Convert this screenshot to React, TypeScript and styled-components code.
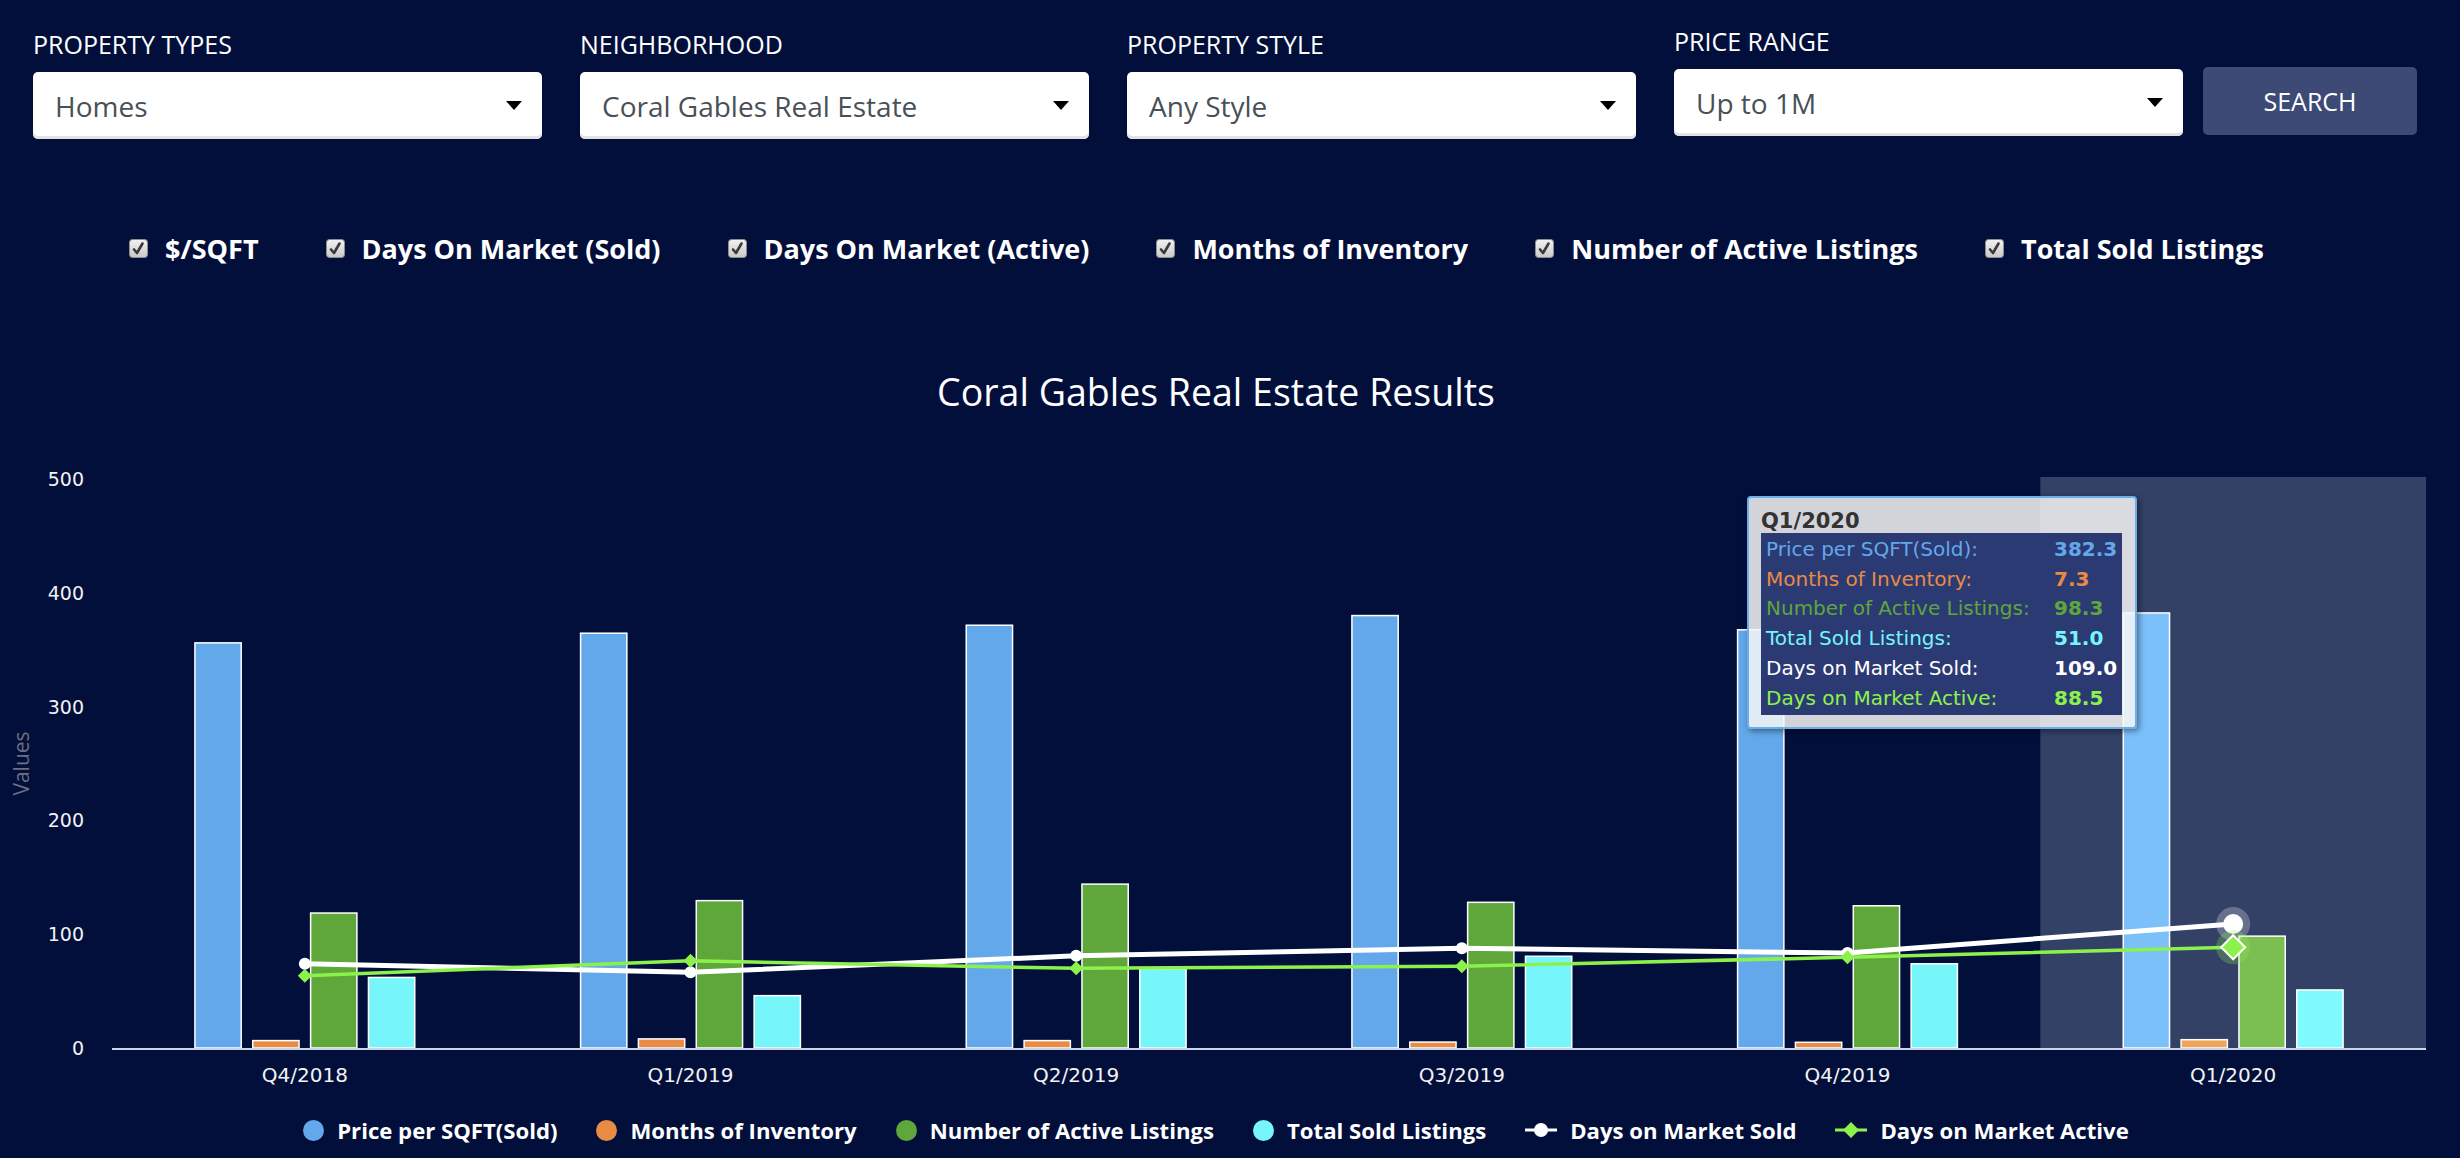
import React from 'react'
import styled, { createGlobalStyle } from 'styled-components'

const GlobalStyle = createGlobalStyle`
  html, body {
    margin: 0;
    padding: 0;
    background: #020f3b;
  }
  body {
    font-family: "Open Sans", "Liberation Sans", sans-serif;
    color: #fff;
  }
`

const filters = [
    { label: 'Property Types', value: 'Homes' },
    { label: 'Neighborhood', value: 'Coral Gables Real Estate' },
    { label: 'Property Style', value: 'Any Style' },
]

const checks = ['$/SQFT', 'Days On Market (Sold)', 'Days On Market (Active)', 'Months of Inventory', 'Number of Active Listings', 'Total Sold Listings']

const categories = ['Q4/2018', 'Q1/2019', 'Q2/2019', 'Q3/2019', 'Q4/2019', 'Q1/2020']

const barSeries = [
    { name: 'Price per SQFT(Sold)', color: '#63a8ea', hover: '#7cc0fa', data: [356, 364.5, 371.5, 380, 367.5, 382.3] },
    { name: 'Months of Inventory', color: '#e88b45', hover: '#f0a55c', data: [6.5, 8, 6.5, 5.2, 5, 7.3] },
    { name: 'Number of Active Listings', color: '#5fa63b', hover: '#7bbf52', data: [118.6, 129.5, 144, 128, 125, 98.3] },
    { name: 'Total Sold Listings', color: '#76f5fb', hover: '#80fbfd', data: [62, 46, 69.5, 80.6, 74, 51] },
]

const lineSeries = [
    { name: 'Days on Market Sold', color: '#ffffff', width: 5, marker: 'circle', data: [74, 66.5, 81, 87.6, 83.5, 109] },
    { name: 'Days on Market Active', color: '#8cf24b', width: 3.5, marker: 'diamond', data: [63.5, 76.7, 70, 71.8, 79.7, 88.5] },
]

const HOVER = 5

// plot geometry, in svg pixels
const W = 2432
const H = 650
const LEFT = 112
const RIGHT = 2426
const TOP = 30
const BOTTOM = 599
const Y_MAX = 500
const catW = (RIGHT - LEFT) / categories.length
const slot = (catW * 0.6) / barSeries.length
const yPos = (v: number) => BOTTOM - (v * (BOTTOM - TOP)) / Y_MAX
const cx = (i: number) => LEFT + (i + 0.5) * catW

const diamond = (x: number, y: number, r: number) =>
    `${x},${y - r} ${x + r},${y} ${x},${y + r} ${x - r},${y}`

const Marker = ({ type, x, y, r, color, stroke }: { type: string; x: number; y: number; r: number; color: string; stroke?: string }) =>
    type === 'circle'
        ? <circle cx={x} cy={y} r={r} fill={color} stroke={stroke} strokeWidth={stroke ? 2 : 0} />
        : <polygon points={diamond(x, y, r)} fill={color} stroke={stroke} strokeWidth={stroke ? 2 : 0} />

const Chart = () => (
    <ChartSvg width={W} height={H} viewBox={`0 0 ${W} ${H}`}>
        <rect x={LEFT + HOVER * catW} y={TOP - 2} width={catW} height={BOTTOM - TOP + 2} fill="rgba(204,214,235,0.25)" />

        {[0, 100, 200, 300, 400, 500].map(v => (
            <AxisText key={v} x={84} y={yPos(v) + 7} textAnchor="end" fontSize={19}>{v}</AxisText>
        ))}
        <AxisTitle transform={`translate(29 ${(TOP + BOTTOM) / 2}) rotate(-90)`} textAnchor="middle">Values</AxisTitle>

        {categories.map((c, i) =>
            barSeries.map((s, j) => {
                const x = LEFT + i * catW + catW * 0.2 + j * slot + slot * 0.1
                const y = yPos(s.data[i])
                return (
                    <rect key={c + j} x={x} y={y} width={slot * 0.8} height={BOTTOM - y}
                        fill={i === HOVER ? s.hover : s.color} stroke="#fff" strokeWidth={1.5} />
                )
            })
        )}

        <line x1={LEFT} x2={RIGHT} y1={BOTTOM + 1} y2={BOTTOM + 1} stroke="#ccd6eb" strokeWidth={2} />

        {categories.map((c, i) => (
            <AxisText key={c} x={cx(i)} y={BOTTOM + 34} textAnchor="middle" fontSize={20}>{c}</AxisText>
        ))}

        {lineSeries.map(s => (
            <g key={s.name}>
                <polyline fill="none" stroke={s.color} strokeWidth={s.width} strokeLinejoin="round"
                    points={s.data.map((v, i) => `${cx(i)},${yPos(v)}`).join(' ')} />
                {s.data.map((v, i) => i === HOVER ? (
                    <g key={i}>
                        <circle cx={cx(i)} cy={yPos(v)} r={17} fill={s.color} opacity={0.25} />
                        <Marker type={s.marker} x={cx(i)} y={yPos(v)} r={s.marker === 'circle' ? 10 : 12} color={s.color}
                            stroke={s.marker === 'circle' ? undefined : '#fff'} />
                    </g>
                ) : (
                    <Marker key={i} type={s.marker} x={cx(i)} y={yPos(v)} r={s.marker === 'circle' ? 6 : 7} color={s.color} />
                ))}
            </g>
        ))}
    </ChartSvg>
)

const CheckIcon = () => (
    <svg width="19" height="19" viewBox="0 0 19 19">
        <defs>
            <linearGradient id="cbg" x1="0" y1="0" x2="0" y2="1">
                <stop offset="0" stopColor="#f2f2f2" />
                <stop offset="1" stopColor="#c9c9c9" />
            </linearGradient>
        </defs>
        <rect x="0.5" y="0.5" width="18" height="18" rx="3" fill="url(#cbg)" stroke="#8d8d8d" />
        <path d="M5 10.5 L8 14 L13.5 4.5" fill="none" stroke="#3a3a3a" strokeWidth="2.6" strokeLinecap="round" strokeLinejoin="round" />
    </svg>
)

const LegendSymbol = ({ color, line, marker }: { color: string; line?: boolean; marker?: string }) =>
    line ? (
        <svg width="32" height="20" viewBox="0 0 32 20">
            <line x1="0" x2="32" y1="10" y2="10" stroke={color} strokeWidth="3" />
            <Marker type={marker || 'circle'} x={16} y={10} r={marker === 'diamond' ? 8 : 7} color={color} />
        </svg>
    ) : (
        <Dot $color={color} />
    )

const App = () => {
    return (
        <>
            <GlobalStyle />
            <FilterBar>
                {filters.map(f => (
                    <Field key={f.label}>
                        <FieldLabel>{f.label}</FieldLabel>
                        <SelectBox>
                            {f.value}
                            <Caret />
                        </SelectBox>
                    </Field>
                ))}
                <PriceGroup>
                    <Field>
                        <FieldLabel>Price Range</FieldLabel>
                        <SelectBox>
                            Up to 1M
                            <Caret />
                        </SelectBox>
                    </Field>
                    <SearchButton type="button">Search</SearchButton>
                </PriceGroup>
            </FilterBar>

            <CheckRow>
                {checks.map(c => (
                    <CheckItem key={c}>
                        <CheckIcon />
                        {c}
                    </CheckItem>
                ))}
            </CheckRow>

            <ChartSection>
                <ChartTitle>Coral Gables Real Estate Results</ChartTitle>
                <Chart />
                <Legend>
                    {barSeries.map(s => (
                        <LegendItem key={s.name}>
                            <LegendSymbol color={s.color} />
                            {s.name}
                        </LegendItem>
                    ))}
                    {lineSeries.map(s => (
                        <LegendItem key={s.name}>
                            <LegendSymbol color={s.color} line marker={s.marker} />
                            {s.name}
                        </LegendItem>
                    ))}
                </Legend>

                <Tooltip>
                    <TooltipTitle>{categories[HOVER]}</TooltipTitle>
                    <TooltipTable>
                        {[...barSeries, ...lineSeries].map(s => (
                            <React.Fragment key={s.name}>
                                <TipLabel $color={s.color}>{s.name}:</TipLabel>
                                <TipValue $color={s.color}>{s.data[HOVER].toFixed(1)}</TipValue>
                            </React.Fragment>
                        ))}
                    </TooltipTable>
                </Tooltip>
            </ChartSection>
        </>
    )
}

const FilterBar = styled.div`
    display: flex;
    align-items: flex-start;
    gap: 38px;
    padding: 29px 0 0 33px;
`

const Field = styled.div`
    display: flex;
    flex-direction: column;
    width: 509px;
`

const PriceGroup = styled.div`
    display: flex;
    align-items: flex-end;
    gap: 20px;
    margin-top: -3px;
`

const FieldLabel = styled.div`
    font-size: 25px;
    line-height: 31px;
    text-transform: uppercase;
    color: #fff;
    margin-bottom: 12px;
`

const SelectBox = styled.div`
    height: 67px;
    box-sizing: border-box;
    display: flex;
    align-items: center;
    justify-content: space-between;
    padding: 0 20px 0 22px;
    background: #fff;
    border-radius: 5px;
    box-shadow: inset 0 -3px 0 #e3e3e3;
    font-size: 28px;
    color: #495057;
`

const Caret = styled.span`
    width: 0;
    height: 0;
    border-left: 8.5px solid transparent;
    border-right: 8.5px solid transparent;
    border-top: 9px solid #000;
`

const SearchButton = styled.button`
    width: 214px;
    height: 68px;
    margin-bottom: 1px;
    border: none;
    border-radius: 5px;
    background: #3d4a75;
    color: #fff;
    font-family: "Open Sans", "Liberation Sans", sans-serif;
    font-size: 25px;
    text-transform: uppercase;
    cursor: pointer;
`

const CheckRow = styled.div`
    display: flex;
    justify-content: center;
    margin-top: 91px;
`

const CheckItem = styled.label`
    display: flex;
    align-items: center;
    gap: 17px;
    margin-right: 67px;
    font-size: 27px;
    line-height: 37px;
    font-weight: 700;
    color: #fff;
    svg { flex: none; }
`

const ChartSection = styled.div`
    position: relative;
    width: ${W}px;
    margin-top: 100px;
`

const ChartTitle = styled.div`
    text-align: center;
    font-size: 37.5px;
    line-height: 50px;
    color: #fff;
`

const ChartSvg = styled.svg`
    display: block;
    margin-top: 32px;
`

const AxisText = styled.text`
    font-family: "DejaVu Sans", Verdana, sans-serif;
    fill: #f2f2f2;
`

const AxisTitle = styled.text`
    font-family: "Open Sans", sans-serif;
    font-size: 21px;
    fill: #6c7080;
`

const Legend = styled.div`
    display: flex;
    justify-content: center;
    gap: 39px;
    margin-top: 15px;
`

const LegendItem = styled.div`
    display: flex;
    align-items: center;
    gap: 13px;
    font-size: 22.15px;
    line-height: 32px;
    font-weight: 700;
    color: #fff;
`

const Dot = styled.span<{ $color: string }>`
    width: 21px;
    height: 21px;
    border-radius: 50%;
    background: ${p => p.$color};
`

const Tooltip = styled.div`
    position: absolute;
    left: 1747px;
    top: 129px;
    width: 390px;
    box-sizing: border-box;
    padding: 12px 13px 12px 12px;
    background: rgba(247, 247, 247, 0.85);
    border: 2px solid #6aaeea;
    border-radius: 4px;
    box-shadow: 2px 2px 6px rgba(0, 0, 0, 0.45);
    font-family: "DejaVu Sans", Verdana, sans-serif;
`

const TooltipTitle = styled.div`
    font-size: 21px;
    line-height: 23px;
    font-weight: 700;
    color: #333;
`

const TooltipTable = styled.div`
    display: grid;
    grid-template-columns: 288px auto;
    padding: 2px 5px 2px 5px;
    background: #2c3a73;
    font-size: 20px;
    line-height: 29.7px;
`

const TipLabel = styled.span<{ $color: string }>`
    color: ${p => p.$color};
    white-space: nowrap;
`

const TipValue = styled.span<{ $color: string }>`
    color: ${p => p.$color};
    font-weight: 700;
`

export default App
